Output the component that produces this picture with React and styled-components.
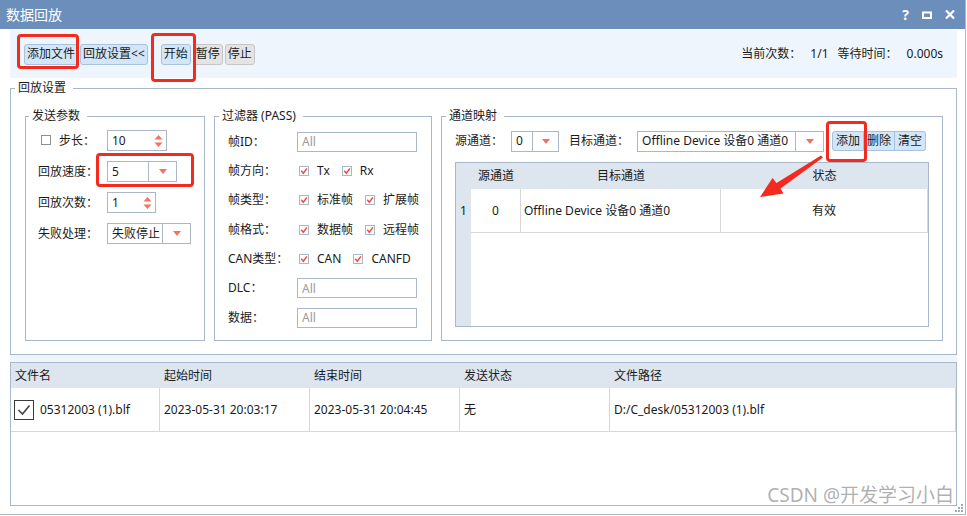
import React from "react";
import styled, { createGlobalStyle } from "styled-components";

const GlobalStyle = createGlobalStyle`
  html, body {
    margin: 0;
    padding: 0;
    background: #fff;
  }
  body {
    font-family: "Noto Sans", "Noto Sans CJK SC", sans-serif;
    font-size: 12px;
    line-height: 16px;
    color: #1b1b1b;
  }
  * {
    box-sizing: border-box;
  }
`;

const Window = styled.div`
  position: relative;
  width: 966px;
  height: 515px;
  display: flex;
  flex-direction: column;
  background: #fff;
  border-right: 1px solid #a9b8c9;
  border-bottom: 1px solid #a9b8c9;
  overflow: hidden;
`;

const TitleBar = styled.div`
  flex: none;
  height: 29px;
  display: flex;
  align-items: center;
  padding: 0 10px 0 6px;
  background: #6b8fba;
  color: #fff;
`;

const Title = styled.div`
  flex: 1;
  font-size: 14px;
`;

const WinButtons = styled.div`
  display: flex;
  align-items: center;
  gap: 13px;
  font-weight: bold;
  font-size: 14px;
`;

const Body = styled.div`
  flex: 1;
  display: flex;
  flex-direction: column;
  padding: 1px 8px 8px 10px;
`;

const Toolbar = styled.div`
  flex: none;
  height: 48px;
  display: flex;
  align-items: center;
  padding: 0 14px 0 14px;
  background: #eef5fc;
`;

const BtnGroup = styled.div`
  display: flex;
  gap: 2px;
  margin-right: ${(p) => p.$after || 0}px;
`;

const ToolBtn = styled.div`
  height: 21px;
  padding: 0 2px;
  display: flex;
  align-items: center;
  border: 1px solid ${(p) => (p.$tone === "gray" ? "#c6c6c6" : "#a6c2df")};
  border-radius: 3px;
  background: ${(p) => (p.$tone === "gray" ? "#e4e4e4" : "#d3e6f8")};
  white-space: nowrap;
`;

const Stats = styled.div`
  margin-left: auto;
  display: flex;
  gap: 9px;
`;

const Fieldset = styled.fieldset`
  margin: 0;
  min-width: 0;
  border: 1px solid #a8b8ca;
  padding: ${(p) => p.$pad || "0"};
  width: ${(p) => (p.$w ? `${p.$w}px` : "auto")};
  flex: ${(p) => (p.$w ? "none" : "1")};
`;

const Legend = styled.legend`
  margin-left: ${(p) => p.$ml}px;
  padding: 0 7px 0 3px;
  line-height: 18px;
`;

const Settings = styled(Fieldset)`
  flex: none;
  margin-top: 1px;
`;

const Groups = styled.div`
  display: flex;
  gap: 9px;
  height: 244px;
  padding-top: 10px;
`;

const Rows = styled.div`
  display: flex;
  flex-direction: column;
  gap: ${(p) => p.$gap}px;
`;

const Row = styled.div`
  height: 21px;
  display: flex;
  align-items: center;
`;

const Label = styled.div`
  width: ${(p) => p.$w || 69}px;
  flex: none;
  display: flex;
  align-items: center;
  gap: 8px;
  white-space: nowrap;
`;

const Box = styled.div`
  width: ${(p) => p.$w}px;
  height: 21px;
  display: flex;
  align-items: center;
  border: 1px solid #a9b7c6;
  background: #fff;
`;

const BoxText = styled.div`
  flex: 1;
  padding-left: 4px;
  white-space: nowrap;
  overflow: hidden;
`;

const SpinArrows = styled.div`
  width: 16px;
  display: flex;
  justify-content: center;
`;

const DropPart = styled.div`
  width: ${(p) => p.$w || 28}px;
  height: 100%;
  display: flex;
  align-items: center;
  justify-content: center;
  border-left: 1px solid #a9b7c6;
`;

const TextInput = styled.input`
  width: 120px;
  height: 20px;
  margin: 0;
  padding: 0 4px;
  border: 1px solid #a9b7c6;
  font: inherit;
  color: #1b1b1b;
  outline: none;
  &::placeholder {
    color: #9a9a9a;
  }
`;

const CheckItem = styled.div`
  display: flex;
  align-items: center;
  gap: 8px;
  margin-left: ${(p) => (p.$first ? 2 : 0)}px;
  margin-right: 12px;
  white-space: nowrap;
`;

const MapBar = styled.div`
  height: 22px;
  display: flex;
  align-items: center;
`;

const MapLabel = styled.div`
  margin-left: ${(p) => p.$before || 0}px;
  margin-right: 8px;
  white-space: nowrap;
`;

const SegGroup = styled.div`
  display: flex;
  margin-left: 8px;
`;

const SegBtn = styled.div`
  height: 20px;
  padding: 0 3px;
  display: flex;
  align-items: center;
  background: #d3e6f8;
  border: 1px solid #a6c2df;
  border-left-width: ${(p) => (p.$first ? 1 : 0)}px;
  border-radius: ${(p) => (p.$first ? "3px 0 0 3px" : p.$last ? "0 3px 3px 0" : "0")};
`;

const ChanTable = styled.div`
  margin-top: 10px;
  height: 165px;
  display: grid;
  grid-template-columns: 15px 50px 200px 1fr;
  grid-template-rows: 26px 44px;
  align-content: start;
  border: 1px solid #a8b8ca;
  background: linear-gradient(to right, #dde5ef 15px, #fff 15px);
`;

const HeadCell = styled.div`
  display: flex;
  align-items: center;
  justify-content: ${(p) => (p.$left ? "flex-start" : "center")};
  padding-left: ${(p) => p.$pl || 0}px;
  background: #dde5ef;
  white-space: nowrap;
`;

const Cell = styled.div`
  display: flex;
  align-items: center;
  justify-content: ${(p) => (p.$left ? "flex-start" : "center")};
  padding-left: ${(p) => p.$pl || 0}px;
  border-right: 1px solid #d6d6d6;
  border-bottom: 1px solid #d6d6d6;
  background: #fff;
  white-space: nowrap;
`;

const RowNum = styled.div`
  display: flex;
  align-items: center;
  justify-content: center;
  background: #dde5ef;
`;

const Splitter = styled.div`
  flex: none;
  height: 7px;
  background: #eef5fc;
`;

const FileTable = styled.div`
  flex: 1;
  display: grid;
  grid-template-columns: 149px 150px 150px 150px 1fr;
  grid-template-rows: 25px 44px;
  align-content: start;
  border: 1px solid #a8b8ca;
`;

const RowCheck = styled.div`
  width: 20px;
  height: 20px;
  margin-right: 6px;
  display: flex;
  align-items: center;
  justify-content: center;
  border: 1px solid #3a3a3a;
  background: #fff;
`;

const Highlight = styled.div`
  position: absolute;
  left: ${(p) => p.$x}px;
  top: ${(p) => p.$y}px;
  width: ${(p) => p.$w}px;
  height: ${(p) => p.$h}px;
  border: 3px solid #f52a1e;
  border-radius: 4px;
  pointer-events: none;
`;

const Arrow = styled.svg`
  position: absolute;
  left: 750px;
  top: 150px;
`;

const Watermark = styled.div`
  position: absolute;
  right: 11px;
  bottom: 7px;
  font-family: "Noto Sans", "Noto Sans CJK SC", sans-serif;
  font-size: 19px;
  line-height: 24px;
  color: rgba(150, 150, 150, 0.75);
  white-space: nowrap;
`;

const Grip = styled.svg`
  position: absolute;
  right: 1px;
  bottom: 1px;
`;

const RED = "#f4735f";

const CheckBox = ({ checked = true }) => (
  <svg width="10" height="10" viewBox="0 0 10 10">
    <rect x="0.5" y="0.5" width="9" height="9" fill="#fff" stroke={checked ? "#a9b8c9" : "#8f8f8f"} />
    {checked && <path d="M2.2 4.8 L4.3 7.2 L7.9 2.4" fill="none" stroke="#f04b3c" strokeWidth="1.5" />}
  </svg>
);

const Spin = () => (
  <svg width="9" height="14" viewBox="0 0 9 14">
    <path d="M0.5 5.5 L4.5 1 L8.5 5.5 Z" fill={RED} />
    <path d="M0.5 8.5 L8.5 8.5 L4.5 13 Z" fill={RED} />
  </svg>
);

const Drop = () => (
  <svg width="8" height="5" viewBox="0 0 8 5">
    <path d="M0 0 L8 0 L4 5 Z" fill={RED} />
  </svg>
);

const SpinBox = ({ value, w }) => (
  <Box $w={w}>
    <BoxText>{value}</BoxText>
    <SpinArrows>
      <Spin />
    </SpinArrows>
  </Box>
);

const Combo = ({ value, w, dw }) => (
  <Box $w={w}>
    <BoxText>{value}</BoxText>
    <DropPart $w={dw}>
      <Drop />
    </DropPart>
  </Box>
);

const Checks = ({ items }) => (
  <>
    {items.map((t, i) => (
      <CheckItem key={t} $first={i === 0}>
        <CheckBox />
        {t}
      </CheckItem>
    ))}
  </>
);

const files = [
  ["05312003 (1).blf", "2023-05-31 20:03:17", "2023-05-31 20:04:45", "无", "D:/C_desk/05312003 (1).blf"],
];

export default function App() {
  return (
    <>
      <GlobalStyle />
      <Window>
        <TitleBar>
          <Title>数据回放</Title>
          <WinButtons>
            <span>?</span>
            <svg width="10" height="8" viewBox="0 0 10 8">
              <rect x="1" y="1.5" width="8" height="5.5" fill="none" stroke="#fff" strokeWidth="2" />
            </svg>
            <svg width="10" height="9" viewBox="0 0 10 9">
              <path d="M1 0.5 L9 8.5 M9 0.5 L1 8.5" stroke="#fff" strokeWidth="2.2" />
            </svg>
          </WinButtons>
        </TitleBar>

        <Body>
          <Toolbar>
            <BtnGroup $after={13}>
              <ToolBtn>添加文件</ToolBtn>
              <ToolBtn>回放设置&lt;&lt;</ToolBtn>
            </BtnGroup>
            <BtnGroup>
              <ToolBtn>开始</ToolBtn>
              <ToolBtn $tone="gray">暂停</ToolBtn>
              <ToolBtn $tone="gray">停止</ToolBtn>
            </BtnGroup>
            <Stats>
              <span>当前次数：</span>
              <span>1/1</span>
              <span>等待时间：</span>
              <span>0.000s</span>
            </Stats>
          </Toolbar>

          <Settings $pad="0 13px 13px 14px">
            <Legend $ml={-10}>回放设置</Legend>
            <Groups>
              <Fieldset $w={180} $pad="5px 0 0 12px">
                <Legend $ml={-9}>发送参数</Legend>
                <Rows $gap={10}>
                  <Row>
                    <Label>
                      <span style={{ marginLeft: 3 }}>
                        <CheckBox checked={false} />
                      </span>
                      步长：
                    </Label>
                    <SpinBox value="10" w={60} />
                  </Row>
                  <Row>
                    <Label>回放速度：</Label>
                    <Combo value="5" w={70} />
                  </Row>
                  <Row>
                    <Label>回放次数：</Label>
                    <SpinBox value="1" w={49} />
                  </Row>
                  <Row>
                    <Label>失败处理：</Label>
                    <Combo value="失败停止" w={84} />
                  </Row>
                </Rows>
              </Fieldset>

              <Fieldset $w={218} $pad="6px 0 0 13px">
                <Legend $ml={-9}>过滤器 (PASS)</Legend>
                <Rows $gap={8.4}>
                  <Row>
                    <Label>帧ID：</Label>
                    <TextInput readOnly placeholder="All" />
                  </Row>
                  <Row>
                    <Label>帧方向：</Label>
                    <Checks items={["Tx", "Rx"]} />
                  </Row>
                  <Row>
                    <Label>帧类型：</Label>
                    <Checks items={["标准帧", "扩展帧"]} />
                  </Row>
                  <Row>
                    <Label>帧格式：</Label>
                    <Checks items={["数据帧", "远程帧"]} />
                  </Row>
                  <Row>
                    <Label>CAN类型：</Label>
                    <Checks items={["CAN", "CANFD"]} />
                  </Row>
                  <Row>
                    <Label>DLC：</Label>
                    <TextInput readOnly placeholder="All" />
                  </Row>
                  <Row>
                    <Label>数据：</Label>
                    <TextInput readOnly placeholder="All" />
                  </Row>
                </Rows>
              </Fieldset>

              <Fieldset $pad="5px 13px 0 13px">
                <Legend $ml={-9}>通道映射</Legend>
                <MapBar>
                  <MapLabel>源通道：</MapLabel>
                  <Combo value="0" w={48} dw={26} />
                  <MapLabel $before={10}>目标通道：</MapLabel>
                  <Combo value="Offline Device 设备0 通道0" w={187} />
                  <SegGroup>
                    <SegBtn $first>添加</SegBtn>
                    <SegBtn>删除</SegBtn>
                    <SegBtn $last>清空</SegBtn>
                  </SegGroup>
                </MapBar>
                <ChanTable>
                  <HeadCell />
                  <HeadCell>源通道</HeadCell>
                  <HeadCell>目标通道</HeadCell>
                  <HeadCell>状态</HeadCell>
                  <RowNum>1</RowNum>
                  <Cell>0</Cell>
                  <Cell $left $pl={3}>Offline Device 设备0 通道0</Cell>
                  <Cell>有效</Cell>
                </ChanTable>
              </Fieldset>
            </Groups>
          </Settings>

          <Splitter />

          <FileTable>
            {["文件名", "起始时间", "结束时间", "发送状态", "文件路径"].map((h) => (
              <HeadCell key={h} $left $pl={4}>
                {h}
              </HeadCell>
            ))}
            {files.map((f) =>
              f.map((v, i) => (
                <Cell key={i} $left $pl={i === 0 ? 3 : 4}>
                  {i === 0 && (
                    <RowCheck>
                      <svg width="14" height="12" viewBox="0 0 14 12">
                        <path d="M1.5 6 L5.5 10 L12.5 1.5" fill="none" stroke="#444" strokeWidth="1.6" />
                      </svg>
                    </RowCheck>
                  )}
                  {v}
                </Cell>
              ))
            )}
          </FileTable>
        </Body>

        <Highlight $x={17} $y={34} $w={62} $h={35} />
        <Highlight $x={151} $y={33} $w={45} $h={49} />
        <Highlight $x={96} $y={153} $w={98} $h={34} />
        <Highlight $x={826} $y={121} $w={41} $h={41} />

        <Arrow width="80" height="52" viewBox="0 0 80 52">
          <polygon points="73,7.5 30.5,38.5 33.5,43.5 10,47 22.5,28 26.5,33 71,5.5" fill="#f52a1e" />
        </Arrow>

        <Watermark>CSDN @开发学习小白</Watermark>
        <Grip width="10" height="10" viewBox="0 0 10 10">
          {[[8, 2], [8, 5], [8, 8], [5, 5], [5, 8], [2, 8]].map(([x, y]) => (
            <rect key={`${x}-${y}`} x={x - 1} y={y - 1} width="2" height="2" fill="#9aa8b8" />
          ))}
        </Grip>
      </Window>
    </>
  );
}
